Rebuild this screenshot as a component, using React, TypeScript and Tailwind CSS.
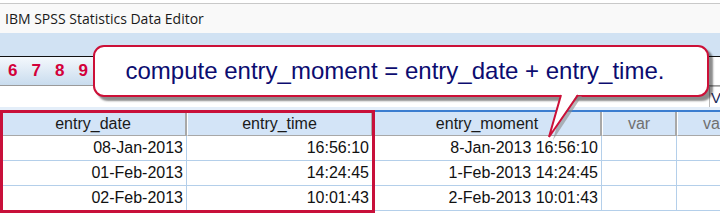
const rows = [
  ['08-Jan-2013', '16:56:10', '8-Jan-2013 16:56:10'],
  ['01-Feb-2013', '14:24:45', '1-Feb-2013 14:24:45'],
  ['02-Feb-2013', '10:01:43', '2-Feb-2013 10:01:43'],
];

const cols = [
  { name: 'entry_date', w: 'w-[187px]', dim: false },
  { name: 'entry_time', w: 'w-[186px]', dim: false },
  { name: 'entry_moment', w: 'w-[229px]', dim: false },
  { name: 'var', w: 'w-[75px]', dim: true },
  { name: 'var', w: 'w-[75px]', dim: true },
];

export default function App() {
  return (
    <div className="relative w-[720px] h-[216px] overflow-hidden bg-white font-['Liberation_Sans',Arial,sans-serif]">
      {/* title bar */}
      <div className="h-[3px] bg-white" />
      <div className="h-[30px] border-t border-[#c9c9c9] bg-[#f9f9f9] flex items-center pl-[5px] font-['Open_Sans','Noto_Sans',sans-serif] text-[14px] text-[#1a1a1a]">
        IBM SPSS Statistics Data Editor
      </div>
      {/* ribbon band */}
      <div className="h-[23px] bg-[#d1e2f3]" />
      {/* toolbar */}
      <div className="h-[30px] border-t border-[#111] border-b border-b-[#9a9a9a] bg-white flex">
        <div className="w-[100px] bg-gradient-to-b from-[#f4f8fc] to-[#c9dcee] flex items-center pl-[8px] gap-[14px] text-[17px] font-bold text-[#d3003a]">
          <span>6</span>
          <span>7</span>
          <span>8</span>
          <span>9</span>
        </div>
      </div>
      <div className="h-[21px] bg-white flex justify-end">
        <div className="w-[11px] h-[21px] border-l border-t border-[#b8b8b8] bg-white text-[15px] text-[#1b2a5a] leading-[21px] pl-[1px] overflow-hidden">
          Vi
        </div>
      </div>
      <div className="h-[3px] bg-[#e4eef9]" />
      <div className="h-[2px] bg-[#3b7dd0]" />

      {/* grid */}
      <div className="flex h-[24px]">
        {cols.map((c, i) => (
          <div
            key={i}
            className={`${c.w} shrink-0 bg-[#d3e4f7] border-r-2 border-r-[#a8a8a8] border-l border-l-white border-b border-b-[#a8a8a8] flex items-center justify-center text-[16px] ${c.dim ? 'text-[#707070]' : 'text-[#1a1a1a]'}`}
          >
            {c.name}
          </div>
        ))}
      </div>
      {rows.map((r, ri) => (
        <div key={ri} className="flex h-[25px] border-b border-[#b4cfea]">
          {cols.map((c, ci) => (
            <div
              key={ci}
              className={`${c.w} shrink-0 border-r border-[#b4cfea] flex items-center justify-end pr-[3px] text-[16px] text-[#111]`}
            >
              {r[ci] ?? ''}
            </div>
          ))}
        </div>
      ))}

      {/* red highlight around first two columns */}
      <div className="absolute left-0 top-[110px] w-[375px] h-[103px] border-[3px] border-[#c8103a]" />

      {/* callout */}
      <div className="absolute left-[93px] top-[45px] w-[616px] h-[52px] rounded-[11px] border-2 border-[#cc1038] bg-white shadow-[4px_4px_2px_rgba(0,0,0,0.45)] flex items-center justify-center pr-[12px] text-[24px] text-[#0c0c70]">
        compute entry_moment = entry_date + entry_time.
      </div>
      <svg className="absolute left-0 top-0" width="720" height="216" viewBox="0 0 720 216">
        <polygon points="565,96 582,96 553,140" fill="#8a8a8a" opacity="0.6" />
        <polygon points="561,93 578,93 549,137" fill="#fff" />
        <polyline points="561,95 549,137 578,95" fill="none" stroke="#cc1038" strokeWidth="2" strokeLinejoin="miter" />
      </svg>
    </div>
  );
}
